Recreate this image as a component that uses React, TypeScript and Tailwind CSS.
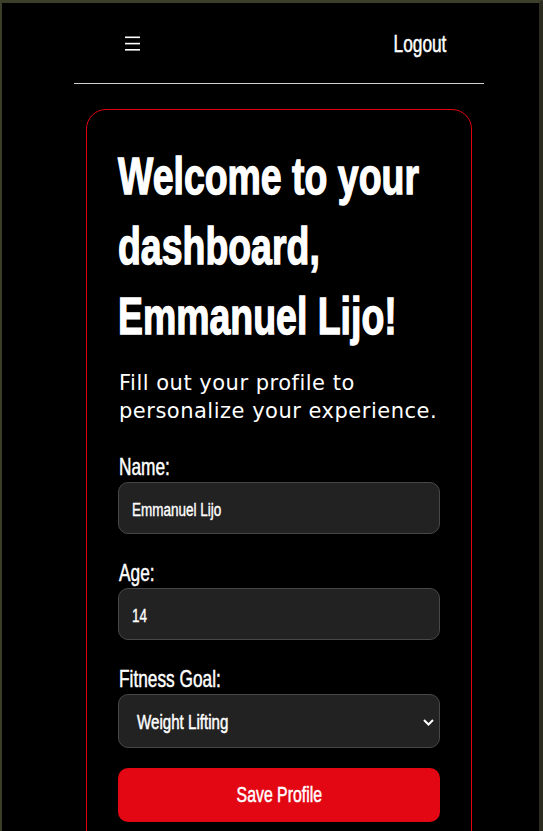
import React from "react";

function Cond({ children, className = "" }: { children: React.ReactNode; className?: string }) {
  return (
    <span className={"inline-block whitespace-nowrap scale-x-[0.72] font-['Liberation_Sans',Arial,sans-serif] " + className}>
      {children}
    </span>
  );
}

export default function App() {
  return (
    <div className="h-[831px] w-[543px] overflow-hidden bg-black border-t-[3px] border-l-2 border-r-4 border-l-[#3b3f2a] border-t-[#3b3f2a] border-r-[#2b2b1f]">
      <header className="ml-[72px] w-[410px] h-[81px] flex items-center justify-between pl-[51px] pr-[38px] border-b border-[#cfcfcf]">
        <svg width="15" height="15" viewBox="0 0 15 15" className="mt-[1px]">
          <rect x="0" y="0.5" width="15" height="1.6" fill="#ffffff" />
          <rect x="0" y="6.8" width="15" height="1.6" fill="#ffffff" />
          <rect x="0" y="13" width="15" height="1.6" fill="#ffffff" />
        </svg>
        <Cond className="origin-right scale-x-[0.63] text-white text-[24px] leading-[28px] mt-[2px] [-webkit-text-stroke:0.5px_#ffffff]">Logout</Cond>
      </header>

      <main className="ml-[84px] mt-[25px] w-[386px] border border-[#e0000f] rounded-[20px] px-[31px] pt-[30px] pb-10 text-white">
        <h1 className="text-[52px] leading-[68px] font-bold [-webkit-text-stroke:1.4px_#ffffff]">
          <Cond className="block origin-left">Welcome to your</Cond>
          <Cond className="block origin-left">dashboard,</Cond>
          <Cond className="block origin-left">Emmanuel Lijo!</Cond>
        </h1>

        <p className="mt-[19px] pl-[1px] text-[21px] leading-[28px] tracking-[0.5px] text-white font-['DejaVu_Sans',sans-serif]">
          Fill out your profile to personalize your experience.
        </p>

        <form className="mt-[27px] flex flex-col">
          <label className="block h-[28px] text-[24px] leading-[28px] pl-[1px] [-webkit-text-stroke:0.5px_#ffffff]">
            <Cond className="origin-left">Name:</Cond>
          </label>
          <div className="mt-[2px] h-[52px] rounded-[10px] bg-[#222222] border border-[#474747] flex items-center pl-[13px] pt-[3px] [-webkit-text-stroke:0.4px_#ffffff]">
            <Cond className="origin-left scale-x-[0.75] text-[18px] leading-[22px]">Emmanuel Lijo</Cond>
          </div>

          <label className="mt-[24px] block h-[28px] text-[24px] leading-[28px] pl-[1px] [-webkit-text-stroke:0.5px_#ffffff]">
            <Cond className="origin-left">Age:</Cond>
          </label>
          <div className="mt-[2px] h-[52px] rounded-[10px] bg-[#222222] border border-[#474747] flex items-center pl-[13px] pt-[3px] [-webkit-text-stroke:0.4px_#ffffff]">
            <Cond className="origin-left scale-x-[0.75] text-[18px] leading-[22px]">14</Cond>
          </div>

          <label className="mt-[24px] block h-[28px] text-[24px] leading-[28px] pl-[1px] [-webkit-text-stroke:0.5px_#ffffff]">
            <Cond className="origin-left">Fitness Goal:</Cond>
          </label>
          <div className="mt-[2px] h-[54px] rounded-[10px] bg-[#222222] border border-[#474747] flex items-center justify-between pl-[18px] pr-[5px] pt-[2px] [-webkit-text-stroke:0.5px_#ffffff]">
            <Cond className="origin-left text-[21px] leading-[24px]">Weight Lifting</Cond>
            <svg width="11" height="7" viewBox="0 0 11 7" fill="none">
              <path d="M1 1 L5.5 5.5 L10 1" stroke="#ffffff" strokeWidth="2" />
            </svg>
          </div>

          <button type="button" className="mt-[20px] h-[54px] rounded-[10px] bg-[#e30613] text-white flex items-center justify-center [-webkit-text-stroke:0.5px_#ffffff]">
            <Cond className="origin-center text-[22px] leading-[26px]">Save Profile</Cond>
          </button>
        </form>
      </main>
    </div>
  );
}
